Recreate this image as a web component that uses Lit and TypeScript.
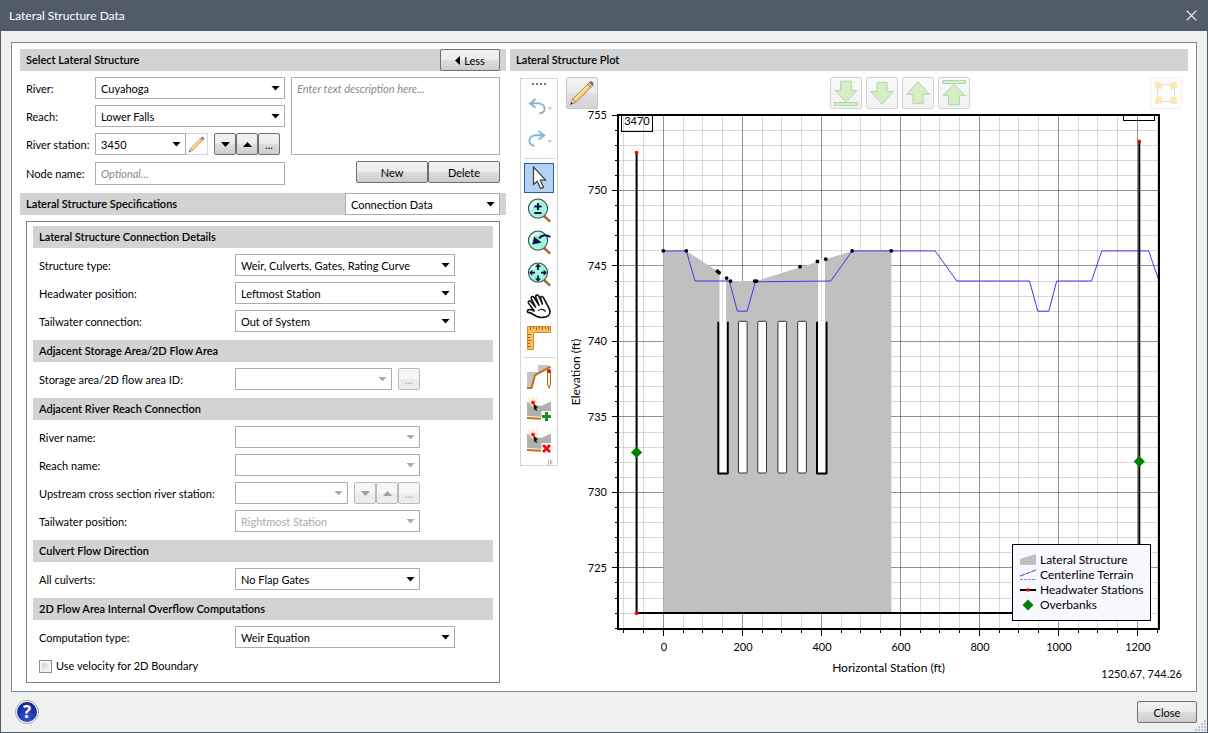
import { LitElement, html, svg, css, nothing, TemplateResult } from "lit";
import { customElement, property, state } from "lit/decorators.js";
import { classMap } from "lit/directives/class-map.js";

type Point = [number, number];

/* ---------- Icons ---------- */

const pencil = html`<svg class="pencil" viewBox="0 0 26 26" aria-hidden="true">
  <path d="M1.4 24.6 L3.8 19 L7 22.2 Z" fill="#f1dcb4" stroke="#8f7648" stroke-width=".7" />
  <path d="M1.4 24.6 L2.4 22 L4 23.6 Z" fill="#222" />
  <path d="M3.8 19 L18.6 4.2 L21.8 7.4 L7 22.2 Z" fill="#f5cf7a" stroke="#8a6a34" stroke-width=".7" />
  <path d="M5.2 19.8 L19.4 5.6" stroke="#fdebb0" stroke-width="1.2" />
  <path d="M18.6 4.2 L20.4 2.4 L23.6 5.6 L21.8 7.4 Z" fill="#c9d3cb" stroke="#55655a" stroke-width=".7" />
  <path d="M20.4 2.4 Q22 .8 23.6 2.4 Q25.2 4 23.6 5.6 Z" fill="#d0606a" stroke="#8b3438" stroke-width=".6" />
</svg>`;

const undo = html`<svg class="history" viewBox="0 0 26 20" aria-hidden="true">
  <path d="M9.5 2 L4 6.5 L9.5 10.5 M4.5 6.3 H11 C16.5 6.3 18.6 9 18.6 11.5 C18.6 14.5 16.5 16.3 13.2 16.3" fill="none" stroke="#85b7d6" stroke-width="2" />
  <path d="M21.5 10.5 H26 L23.7 12.8 Z" fill="#b4b4b4" />
</svg>`;

const redo = html`<svg class="history" viewBox="0 0 26 20" aria-hidden="true">
  <path d="M12.5 2 L18 6.5 L12.5 10.5 M17.5 6.3 H10.5 C5.5 6.3 3.4 9 3.4 11.8 C3.4 14.5 5.5 16.6 8.6 16.8" fill="none" stroke="#85b7d6" stroke-width="2" />
  <path d="M21.5 11.5 H26 L23.7 13.8 Z" fill="#b4b4b4" />
</svg>`;

const pointer = html`<svg class="tool" viewBox="0 0 24 24" aria-hidden="true">
  <path d="M6.5 1 V18.5 L10.2 15.2 L13.6 22.6 L16.6 21.4 L13.4 14.2 H18.6 Z" fill="#fff" stroke="#3c3c3c" stroke-width="1.2" />
</svg>`;

const magnifier = (inner: TemplateResult) => html`<svg class="tool" viewBox="0 0 24 24" aria-hidden="true">
  <path d="M17 18 L23.2 23.6" stroke="#a5692f" stroke-width="2.6" />
  <circle cx="11" cy="10.6" r="9.6" fill="#a5f5dd" stroke="#3b4f4a" stroke-width="1.1" />
  <path d="M4 12 A7.5 7.5 0 0 1 12 3.5" fill="none" stroke="#defff5" stroke-width="2.4" />
  ${inner}
</svg>`;

const zoomInOut = magnifier(svg`<path d="M11 5 V12 M7.4 8.5 H14.6 M7.4 15 H14.6" stroke="#12124f" stroke-width="2" />`);
const zoomPrevious = magnifier(svg`
  <path d="M23.5 7 C19 4.2 15 5 12 8.2" fill="none" stroke="#12124f" stroke-width="2" />
  <path d="M5.4 14.6 L7 6.4 L14.6 12.6 Z" fill="#12124f" />`);
const zoomExtents = magnifier(svg`
  <path d="M11 1.6 L14 5 H8 Z M11 19.8 L14 16.4 H8 Z M2 10.7 L5.4 7.7 V13.7 Z M20 10.7 L16.6 7.7 V13.7 Z" fill="#12124f" />
  <path d="M11 4 V8 M11 13.4 V17 M4 10.7 H8 M14 10.7 H18" stroke="#12124f" stroke-width="1.8" />`);

const hand = html`<svg class="tool" viewBox="0 0 24 24" aria-hidden="true">
  <path d="M9.3 22.3 C6.5 20.6 4.2 18.7 1.2 18.4 C-.2 18.2 .2 15.8 2 15.6 C4 15.3 5.5 16.2 7.2 17 L1.6 9.4 C.4 7.4 2.6 6 4 7.7 L8.6 13 L4.4 5 C3.4 2.8 5.8 1.6 7.2 3.6 L12 11.2 L8.8 3.2 C8.2 1 10.8 .2 11.8 2.2 L15.4 10 L13.6 4.4 C13.2 2.4 15.4 1.8 16.4 3.6 L21.4 13 C23.6 17 23.4 20 21.4 21.6 C18.5 23.8 12.5 24 9.3 22.3 Z" fill="#fff" stroke="#111" stroke-width="1.6" stroke-linejoin="round" />
  <path d="M11 16.8 C14 14.2 17 15.4 18.6 17.6" fill="none" stroke="#111" stroke-width="1.1" />
</svg>`;

const ruler = html`<svg class="tool" viewBox="0 0 24 24" aria-hidden="true">
  <path d="M.5 .5 H23.5 V6.5 H6.5 V23.5 H.5 Z" fill="#f8bf5e" stroke="#d98c1c" />
  <path d="M3.5 1 V4 M6.5 1 V3 M9.5 1 V4 M12.5 1 V3 M15.5 1 V4 M18.5 1 V3 M21.5 1 V4 M1 8.5 H4 M1 11.5 H3 M1 14.5 H4 M1 17.5 H3 M1 20.5 H4" stroke="#9a6415" />
</svg>`;

const editProfile = html`<svg class="tool" viewBox="0 0 24 24" aria-hidden="true">
  <path d="M0 7 H11 V0 H22 V4 L8 11 L5 23 H0 Z" fill="#c4c4c4" />
  <path d="M0 23 H4.6 L8 10.2 L23.6 1.6" fill="none" stroke="#c66f10" stroke-width="1.9" />
  <path d="M20.5 7.5 H23.5 V19 L22 23.4 L20.5 19 Z" fill="#fff4dd" stroke="#b4681a" />
  <circle cx="22" cy="6.2" r="2.1" fill="#d31f1f" />
</svg>`;

const terrainPoint = (badge: TemplateResult) => html`<svg class="tool" viewBox="0 0 24 24" aria-hidden="true">
  <path d="M0 5 L14 9 L24 4.6 V14 H15 V20 L0 19 Z" fill="#b0b0b0" />
  <path d="M0 21 L14 21.8" stroke="#c66f10" stroke-width="2" />
  <path d="M6 -1 V12 M-.5 5.6 H12.5 M1.2 .8 L10.8 10.4 M10.8 .8 L1.2 10.4" stroke="#f7b77a" stroke-width="1" stroke-dasharray="1.5 1" />
  <circle cx="6" cy="5.6" r="3.4" fill="#fde3cb" />
  <circle cx="6" cy="5.6" r="1.9" fill="#ee1c1c" />
  <path d="M6.8 6.6 L11 11 L9 11.4 L10.2 13.6 L8.8 14 L8 12 L6.8 13 Z" fill="#111" />
  <rect x="14.5" y="14" width="10" height="10" fill="#fff" />
  ${badge}
</svg>`;
const addPoint = terrainPoint(svg`<path d="M19.5 15 V24 M15 19.5 H24" stroke="#1f8f1f" stroke-width="3" />`);
const removePoint = terrainPoint(svg`<path d="M16 16 L23 23 M23 16 L16 23" stroke="#ee1313" stroke-width="3" />`);

const arrow = (kind: string) => {
  const down = kind.startsWith("down");
  const toEnd = kind.endsWith("end");
  const flip = down ? "" : "matrix(1 0 0 -1 0 26)";
  return html`<svg class="arrow" viewBox="0 0 26 26" aria-hidden="true">
    <g fill="#d6edc6" stroke="#b3d3b0" stroke-width="1" transform=${flip || nothing}>
      ${toEnd
        ? svg`<path d="M7.6 1.2 H18.4 V10.6 H24 L13 21.6 L2 10.6 H7.6 Z" /><path d="M1.5 22.5 H24.5 V25.5 H1.5 Z" />`
        : svg`<path d="M8 2.4 H18 V11.6 H24.4 L13 24 L1.6 11.6 H8 Z" />`}
    </g>
  </svg>`;
};

const extents = html`<svg class="arrow" viewBox="0 0 26 26" aria-hidden="true">
  <rect x="4.5" y="4.5" width="17" height="17" fill="none" stroke="#d6e2ee" stroke-width="1.2" />
  <g fill="#fdeaa6">
    <path d="M2 2 H9 L7 4 L10 7 L7 10 L4 7 L2 9 Z" />
    <path d="M24 2 V9 L22 7 L19 10 L16 7 L19 4 L17 2 Z" />
    <path d="M2 24 V17 L4 19 L7 16 L10 19 L7 22 L9 24 Z" />
    <path d="M24 24 H17 L19 22 L16 19 L19 16 L22 19 L24 17 Z" />
  </g>
</svg>`;

/* ---------- Profile plot ---------- */

@customElement("profile-plot")
export class ProfilePlot extends LitElement {
  @state() private w = 622;
  @state() private h = 574;
  private observer?: ResizeObserver;

  private readonly domainX: Point = [-115, 1255];
  private readonly domainY: Point = [720.95, 755];

  private readonly structure: Point[] = [
    [0, 722], [0, 746], [58, 746], [140, 744.6], [170, 744], [236, 744], [478, 746], [577, 746], [577, 722],
  ];
  private readonly vertices: Point[] = [
    [0, 746], [58, 746], [137, 744.65], [141, 744.55], [160, 744.2], [170, 744], [231, 744], [236, 744],
    [346, 744.95], [390, 745.3], [411, 745.45], [478, 746], [577, 746],
  ];
  private readonly terrain: Point[] = [
    [0, 746], [58, 746], [80, 744], [167, 744], [187, 742], [212, 742], [233, 743.95], [424, 744], [478, 746],
    [688, 746], [743, 744], [927, 744], [948, 742], [976, 742], [996, 744], [1084, 744], [1110, 746],
    [1229, 746], [1255, 744],
  ];
  private readonly headwater: Point[] = [[-68, 752.5], [-68, 722], [1205, 722], [1205, 753.25]];
  private readonly overbanks: Point[] = [[-68, 732.65], [1205, 732.05]];
  private readonly culverts: Point[] = [[190, 212], [239, 261], [290, 312], [340, 362]];
  private readonly gates: [number, number, number][] = [[139, 163, 744.65], [389, 413, 745.5]];

  static styles = css`
    :host {
      display: block;
      flex: 1 1 0;
      min-height: 400px;
      contain: size;
      overflow: hidden;
    }
    svg { display: block; font-family: Lato, "Open Sans", sans-serif; font-size: 12px; }
    .tick { font-size: 11px; }
    .crisp { shape-rendering: crispEdges; }
    .end { text-anchor: end; }
    .mid { text-anchor: middle; }
    .minor { stroke: #000; stroke-opacity: 0.15; }
    .major { stroke: #000; stroke-opacity: 0.42; }
    .ink { stroke: #000; fill: none; }
    .thick { stroke-width: 2; }
    .slot { fill: #fff; stroke: #333; }
    .body { fill: #c0c0c0; }
    .void { fill: #fff; }
    .terrain { fill: none; stroke: #3a3af0; }
    .water { fill: none; stroke: #000; stroke-width: 2; }
    .red { fill: #f00; }
    .green { fill: #008000; }
    .legend { fill: #f8f8ff; stroke: #000; }
  `;

  connectedCallback() {
    super.connectedCallback();
    this.observer = new ResizeObserver(([entry]) => {
      this.w = Math.round(entry.contentRect.width);
      this.h = Math.round(entry.contentRect.height);
    });
    this.observer.observe(this);
  }

  disconnectedCallback() {
    this.observer?.disconnect();
    super.disconnectedCallback();
  }

  private get frame() {
    return { left: 52, top: 6, right: this.w - 29, bottom: this.h - 54 };
  }

  private x(station: number) {
    const { left, right } = this.frame;
    const [a, b] = this.domainX;
    return left + ((station - a) / (b - a)) * (right - left);
  }

  private y(elevation: number) {
    const { top, bottom } = this.frame;
    const [a, b] = this.domainY;
    return bottom - ((elevation - a) / (b - a)) * (bottom - top);
  }

  private points(list: Point[]) {
    return list.map(([s, e]) => `${this.x(s).toFixed(1)},${this.y(e).toFixed(1)}`).join(" ");
  }

  private range(from: number, to: number, step: number) {
    const out: number[] = [];
    for (let v = from; v <= to; v += step) out.push(v);
    return out;
  }

  private grid() {
    const { left, top, right, bottom } = this.frame;
    return svg`<g class="crisp">
      ${this.range(-100, 1250, 50).map((s) => {
        const x = Math.floor(this.x(s)) + 0.5;
        const major = s % 200 === 0;
        return svg`<path class=${major ? "major" : "minor"} d="M${x} ${top} V${bottom}" />
          <path class="ink" d="M${x} ${bottom} v${major ? 7 : 4}" />`;
      })}
      ${this.range(721, 755, 1).map((e) => {
        const y = Math.floor(this.y(e)) + 0.5;
        const major = e % 5 === 0;
        return svg`<path class=${major ? "major" : "minor"} d="M${left} ${y} H${right}" />
          <path class="ink" d="M${left} ${y} h${major ? -6 : -3}" />`;
      })}
    </g>`;
  }

  private openings() {
    const top = this.y(741.3);
    const bottom = this.y(731.25);
    return svg`
      ${this.gates.map(([a, b, crest]) => svg`
        <rect class="void" x=${this.x(a + 3)} y=${this.y(crest)} width=${this.x(b - 4) - this.x(a + 3)} height=${top - this.y(crest) + 1} />
        <path class="minor" d="M${this.x((a + b) / 2 - 1)} ${this.y(crest)} V${top}" />
        <path class="void" d="M${this.x(a)} ${top} V${bottom} H${this.x(b)} V${top} Z" />
        <path class="ink thick" stroke-linejoin="round" d="M${this.x(a)} ${top} V${bottom} H${this.x(b)} V${top}" />`)}
      ${this.culverts.map(([a, b]) => svg`
        <rect class="slot" x=${this.x(a)} y=${top - 0.5} width=${this.x(b) - this.x(a)} height=${bottom - top} rx="1" />`)}`;
  }

  private diamond(cx: number, cy: number, r: number) {
    return svg`<path class="green" d="M${cx} ${cy - r} L${cx + r} ${cy} L${cx} ${cy + r} L${cx - r} ${cy} Z" />`;
  }

  private legend() {
    const { right, bottom } = this.frame;
    const left = right - 146.5;
    const top = bottom - 84.5;
    const names = ["Lateral Structure", "Centerline Terrain", "Headwater Stations", "Overbanks"];
    return svg`
      <rect class="legend" x=${left} y=${top} width="138" height="76" />
      <g transform="translate(${left + 7.5} ${top + 7.5})">
        <path class="body" d="M0 7 L16 2 V13 H0 Z" />
        <path class="terrain" stroke-dasharray="5 1" d="M0 24 L16 18" />
        <path class="terrain" stroke-dasharray="3 1" stroke-opacity=".6" d="M0 27.5 H16" />
        <path class="water" d="M0 38 H16" />
        <circle class="red" cx="8" cy="38" r="1.8" />
        ${this.diamond(8, 53, 5.5)}
        ${names.map((name, i) => svg`<text x="20" y=${12 + i * 15}>${name}</text>`)}
      </g>`;
  }

  render() {
    const { left, top, right, bottom } = this.frame;
    const cx = (left + right) / 2;
    const cy = (top + bottom) / 2;
    const tagA = Math.round(this.x(-68));
    const tagB = Math.round(this.x(1205));
    return html`<svg width=${this.w} height=${this.h} viewBox="0 0 ${this.w} ${this.h}">
      <defs>
        <clipPath id="area"><rect x=${left} y=${top} width=${right - left} height=${bottom - top} /></clipPath>
      </defs>
      ${this.grid()}
      <g clip-path="url(#area)">
        <polygon class="body" points=${this.points(this.structure)} />
        ${this.openings()}
        <polyline class="terrain" points=${this.points(this.terrain)} />
        ${this.vertices.map(([s, e]) => svg`<circle cx=${this.x(s)} cy=${this.y(e)} r="1.9" />`)}
        <polyline class="water" points=${this.points(this.headwater)} />
        ${this.headwater.map(([s, e]) => svg`<circle class="red" cx=${this.x(s)} cy=${this.y(e)} r="1.9" />`)}
        ${this.overbanks.map(([s, e]) => this.diamond(this.x(s), this.y(e), 5.6))}
        <rect class="ink" x=${tagA - 15.5} y=${top - 12.5} width="31" height="29" />
        <text class="tick mid" x=${tagA} y=${top + 10}>3470</text>
        <rect class="ink" x=${tagB - 15.5} y=${top - 23.5} width="31" height="29" />
      </g>
      <rect class="ink thick crisp" x=${left} y=${top} width=${right - left} height=${bottom - top} />
      ${this.legend()}
      ${this.range(725, 755, 5).map((e) => svg`<text class="tick end" x=${left - 11} y=${Math.round(this.y(e)) + 4}>${e}</text>`)}
      ${this.range(0, 1200, 200).map((s) => svg`<text class="tick mid" x=${Math.ceil(this.x(s))} y=${bottom + 22}>${s}</text>`)}
      <text class="mid" x=${cx} y=${bottom + 43}>Horizontal Station (ft)</text>
      <text class="mid" transform="translate(14 ${cy}) rotate(-90)">Elevation (ft)</text>
      <text class="tick end" x=${this.w - 6} y=${this.h - 5}>1250.67, 744.26</text>
    </svg>`;
  }
}

/* ---------- Dialog ---------- */

@customElement("app-root")
export class AppRoot extends LitElement {
  @property() station = "3450";

  static styles = css`
    :host {
      display: block;
      font-family: Lato, "Open Sans", sans-serif;
      font-size: 11px;
      line-height: 14px;
      color: #000;
    }
    * { box-sizing: border-box; }
    button, input, select, textarea { font: inherit; color: inherit; margin: 0; }
    .window {
      display: flex;
      flex-direction: column;
      min-height: 100vh;
      background: #f0f0f0;
      border: 1px solid #4f5b69;
      border-top: 0;
    }
    .titlebar {
      display: flex;
      align-items: center;
      justify-content: space-between;
      height: 31px;
      padding: 0 10px 0 8px;
      background: #515c6a;
      color: #fff;
      font-size: 12px;
    }
    h1, h2 { margin: 0; font-size: inherit; font-weight: inherit; }
    .dismiss { display: grid; padding: 0; border: 0; background: none; }
    .dismiss svg { width: 11px; height: 11px; }

    .panel {
      flex: 1;
      display: grid;
      grid-template-columns: 486px 1fr;
      gap: 4px;
      margin: 11px 10px 0;
      padding: 6px 8px 8px;
      background: #fff;
      border: 1px solid #828790;
    }
    .column { display: flex; flex-direction: column; min-width: 0; }
    .section {
      display: flex;
      align-items: center;
      justify-content: space-between;
      height: 22px;
      padding: 0 6px;
      background: #d3d3d3;
    }
    .section h2 { font-weight: 600; }

    .identity {
      display: grid;
      grid-template-columns: 69px 190px 1fr;
      row-gap: 6px;
      align-items: center;
      margin: 6px 6px 8px;
    }
    .identity label, .row label, .check { padding-top: 2px; }
    .description { grid-area: 1 / 3 / 4 / 4; align-self: stretch; margin-left: 6px; }
    .inline { display: flex; gap: 6px; }
    .group { display: flex; }
    .trailing { display: flex; justify-content: flex-end; align-self: start; }

    textarea, .text {
      padding: 4px 5px;
      border: 1px solid #abadb3;
      background: #fff;
      border-radius: 0;
      resize: none;
      outline: none;
    }
    .text { width: 100%; height: 23px; margin-top: 1px; }
    ::placeholder { color: #8a8a8a; font-style: italic; opacity: 1; }

    .combo { display: grid; align-items: center; height: 22px; color: #000; }
    .combo select, .combo::after { grid-area: 1 / 1; }
    .combo select {
      width: 100%;
      height: 22px;
      padding: 1px 18px 0 5px;
      border: 1px solid #acacac;
      border-radius: 0;
      background: #fff;
      appearance: none;
      opacity: 1;
    }
    .combo::after {
      content: "";
      justify-self: end;
      width: 9px;
      height: 5px;
      margin-right: 5px;
      background: currentColor;
      clip-path: polygon(0 0, 100% 0, 50% 100%);
      pointer-events: none;
    }
    .combo.off { color: #acacac; }
    .combo.full { width: 190px; }
    .combo.station { width: 91px; }
    .combo.view { width: 155px; }
    .combo.wide { width: 220px; }
    .combo.medium { width: 185px; }
    .combo.area { width: 157px; }
    .combo.cross { width: 113px; }

    .push {
      display: inline-flex;
      align-items: center;
      justify-content: center;
      gap: 4px;
      width: 72px;
      height: 22px;
      padding: 1px 0 0;
      border: 1px solid #707070;
      border-radius: 2px;
      background: linear-gradient(#f3f3f3, #ebebeb 50%, #dddddd 50%, #cdcdcd);
    }
    .push.short { width: 60px; }
    .push.mini { width: 22px; }
    .push:disabled { color: #a0a0a0; border-color: #b8bbbd; background: linear-gradient(#f6f6f6 50%, #ececec 50%); }
    .push svg { width: 9px; height: 5px; fill: currentColor; }
    .push .left { width: 5px; height: 9px; }
    .edit {
      display: grid;
      place-items: center;
      width: 22px;
      height: 22px;
      padding: 0;
      border: 1px solid #d9d9d9;
      border-left: 0;
      background: #fff;
    }
    .edit .pencil { width: 17px; height: 17px; }

    .specs {
      display: flex;
      flex-direction: column;
      gap: 6px;
      margin: 6px 6px 0;
      padding: 4px 6px 6px;
      border: 1px solid #828282;
    }
    .specs .section:not(:first-child) { margin-top: 2px; }
    .row {
      display: grid;
      grid-template-columns: 196px 1fr;
      align-items: center;
      height: 22px;
      padding-left: 6px;
    }
    .check { display: flex; align-items: center; gap: 4px; height: 22px; padding-left: 6px; }
    .check input {
      appearance: none;
      width: 13px;
      height: 13px;
      border: 1px solid #8e8f8f;
      background: linear-gradient(135deg, #cbcfd5, #f6f6f6) content-box, #f4f4f4;
      padding: 2px;
    }

    .workspace { flex: 1; display: flex; gap: 8px; padding: 6px 0 0 10px; }
    .toolbar {
      display: flex;
      flex-direction: column;
      align-items: center;
      align-self: flex-start;
      gap: 2px;
      width: 38px;
      margin-top: 1px;
      border: 1px solid #d3d3d3;
    }
    .handle { display: flex; justify-content: center; gap: 2px; height: 11px; padding-top: 4px; }
    .handle i { width: 2px; height: 2px; background: #707070; }
    .toolbar button { display: grid; place-items: center; width: 30px; height: 30px; padding: 0; border: 0; background: none; }
    .toolbar button.on { border: 1px solid #1c62b9; background: #b5d3f0; }
    .toolbar hr { width: 31px; height: 1px; margin: 2px 0; border: 0; background: #d3d3d3; }
    .toolbar .overflow { width: 100%; height: 7px; }
    .toolbar .overflow svg { width: 5px; height: 6px; margin-left: auto; margin-right: 4px; }
    .tool { display: block; width: 24px; height: 24px; overflow: visible; }
    .history { display: block; width: 26px; height: 20px; }

    .plot-column { flex: 1; display: flex; flex-direction: column; min-width: 0; }
    .plot-actions { display: flex; justify-content: space-between; padding-right: 6px; }
    .steps { display: flex; gap: 4px; padding-left: 52px; }
    .square {
      display: grid;
      place-items: center;
      width: 32px;
      height: 32px;
      padding: 0;
      border: 1px solid #c6c6c6;
      border-radius: 2px;
      background: linear-gradient(#f3f3f3, #ebebeb 50%, #e0e0e0 50%, #d3d3d3);
    }
    .square:disabled { border-color: #d3d3d3; background: linear-gradient(#f9f9f9, #f1f1f1); }
    .square.faint:disabled { border-color: #f0f0f0; background: #fefefe; }
    .square .pencil { width: 26px; height: 26px; }
    .arrow { display: block; width: 26px; height: 26px; }

    .footer {
      position: relative;
      display: flex;
      align-items: center;
      justify-content: space-between;
      height: 40px;
      padding: 0 10px 0 14px;
    }
    .help { display: block; padding: 0; border: 0; background: none; }
    .help svg { display: block; width: 24px; height: 24px; }
    .help text { font: 700 17px "Open Sans", sans-serif; fill: #fff; text-anchor: middle; }
    .grip { position: absolute; right: 1px; bottom: 1px; width: 11px; height: 11px; fill: #bcc3cd; }
  `;

  private combo(id: string, size: string, value = "", disabled = false) {
    return html`<span class=${classMap({ combo: true, [size]: true, off: disabled })}>
      <select id=${id} ?disabled=${disabled}><option>${value}</option></select>
    </span>`;
  }

  private row(id: string, label: string, control: TemplateResult) {
    return html`<div class="row"><label for=${id}>${label}</label>${control}</div>`;
  }

  private section(title: string) {
    return html`<div class="section"><h2>${title}</h2></div>`;
  }

  private stepper(disabled = false) {
    return html`<span class="group">
      <button class="push mini" aria-label="Next" ?disabled=${disabled}>
        <svg viewBox="0 0 9 5"><path d="M0 0 H9 L4.5 5 Z" /></svg>
      </button>
      <button class="push mini" aria-label="Previous" ?disabled=${disabled}>
        <svg viewBox="0 0 9 5"><path d="M0 5 H9 L4.5 0 Z" /></svg>
      </button>
      <button class="push mini" ?disabled=${disabled}>...</button>
    </span>`;
  }

  private tool(label: string, icon: TemplateResult, on = false) {
    return html`<button class=${classMap({ on })} aria-label=${label}>${icon}</button>`;
  }

  private renderForm() {
    return html`<section class="column">
      <div class="section">
        <h2>Select Lateral Structure</h2>
        <button class="push short">
          <svg class="left" viewBox="0 0 5 9"><path d="M5 0 V9 L0 4.5 Z" /></svg>Less
        </button>
      </div>
      <div class="identity">
        <label for="river">River:</label>
        ${this.combo("river", "full", "Cuyahoga")}
        <textarea class="description" aria-label="Description" placeholder="Enter text description here..."></textarea>
        <label for="reach">Reach:</label>
        ${this.combo("reach", "full", "Lower Falls")}
        <label for="station">River station:</label>
        <div class="inline">
          <span class="group">
            ${this.combo("station", "station", this.station)}
            <button class="edit" aria-label="Edit river station">${pencil}</button>
          </span>
          ${this.stepper()}
        </div>
        <label for="node">Node name:</label>
        <input id="node" class="text" placeholder="Optional..." />
        <div class="trailing">
          <button class="push">New</button>
          <button class="push">Delete</button>
        </div>
      </div>
      <div class="section">
        <h2>Lateral Structure Specifications</h2>
        ${this.combo("view", "view", "Connection Data")}
      </div>
      <div class="specs">
        ${this.section("Lateral Structure Connection Details")}
        ${this.row("type", "Structure type:", this.combo("type", "wide", "Weir, Culverts, Gates, Rating Curve"))}
        ${this.row("head", "Headwater position:", this.combo("head", "wide", "Leftmost Station"))}
        ${this.row("tail", "Tailwater connection:", this.combo("tail", "wide", "Out of System"))}
        ${this.section("Adjacent Storage Area/2D Flow Area")}
        ${this.row("area", "Storage area/2D flow area ID:", html`<div class="inline">
          ${this.combo("area", "area", "", true)}
          <button class="push mini" disabled>...</button>
        </div>`)}
        ${this.section("Adjacent River Reach Connection")}
        ${this.row("rname", "River name:", this.combo("rname", "medium", "", true))}
        ${this.row("rreach", "Reach name:", this.combo("rreach", "medium", "", true))}
        ${this.row("upstream", "Upstream cross section river station:", html`<div class="inline">
          ${this.combo("upstream", "cross", "", true)}${this.stepper(true)}
        </div>`)}
        ${this.row("tailpos", "Tailwater position:", this.combo("tailpos", "medium", "Rightmost Station", true))}
        ${this.section("Culvert Flow Direction")}
        ${this.row("culverts", "All culverts:", this.combo("culverts", "medium", "No Flap Gates"))}
        ${this.section("2D Flow Area Internal Overflow Computations")}
        ${this.row("comp", "Computation type:", this.combo("comp", "wide", "Weir Equation"))}
        <label class="check"><input type="checkbox" />Use velocity for 2D Boundary</label>
      </div>
    </section>`;
  }

  private renderPlot() {
    return html`<section class="column">
      ${this.section("Lateral Structure Plot")}
      <div class="workspace">
        <div class="toolbar" role="toolbar">
          <span class="handle"><i></i><i></i><i></i><i></i></span>
          ${this.tool("Undo", undo)}
          ${this.tool("Redo", redo)}
          <hr />
          ${this.tool("Select", pointer, true)}
          ${this.tool("Zoom", zoomInOut)}
          ${this.tool("Zoom previous", zoomPrevious)}
          ${this.tool("Zoom extents", zoomExtents)}
          ${this.tool("Pan", hand)}
          ${this.tool("Measure", ruler)}
          <hr />
          ${this.tool("Edit profile", editProfile)}
          ${this.tool("Add point", addPoint)}
          ${this.tool("Remove point", removePoint)}
          <button class="overflow" aria-label="More tools">
            <svg viewBox="0 0 5 6" fill="#bdbdbd"><path d="M0 0 H1 V6 H0 Z M2 0 L5 3 L2 6 Z" /></svg>
          </button>
        </div>
        <div class="plot-column">
          <div class="plot-actions">
            <button class="square" aria-label="Edit">${pencil}</button>
            <div class="steps">
              ${["down-end", "down", "up", "up-end"].map(
                (kind) => html`<button class="square" aria-label=${kind} disabled>${arrow(kind)}</button>`
              )}
            </div>
            <button class="square faint" aria-label="Full extents" disabled>${extents}</button>
          </div>
          <profile-plot></profile-plot>
        </div>
      </div>
    </section>`;
  }

  render() {
    return html`<div class="window">
      <header class="titlebar">
        <h1>Lateral Structure Data</h1>
        <button class="dismiss" aria-label="Close window">
          <svg viewBox="0 0 11 11"><path d="M.7 .7 L10.3 10.3 M10.3 .7 L.7 10.3" stroke="#fff" stroke-width="1.1" /></svg>
        </button>
      </header>
      <main class="panel">${this.renderForm()}${this.renderPlot()}</main>
      <footer class="footer">
        <button class="help" aria-label="Help">
          <svg viewBox="0 0 24 24">
            <defs>
              <radialGradient id="ball" cx="50%" cy="75%" r="70%">
                <stop offset="0" stop-color="#2f55d4" /><stop offset="1" stop-color="#0f2590" />
              </radialGradient>
            </defs>
            <circle cx="12" cy="12" r="11.5" fill="#f4f4f4" stroke="#a8a8a8" />
            <circle cx="12" cy="12" r="10" fill="url(#ball)" />
            <text x="12" y="18">?</text>
          </svg>
        </button>
        <button class="push short">Close</button>
        <svg class="grip" viewBox="0 0 11 11">
          <path d="M9 0h2v2H9z M6 3h2v2H6z M9 3h2v2H9z M3 6h2v2H3z M6 6h2v2H6z M9 6h2v2H9z M0 9h2v2H0z M3 9h2v2H3z M6 9h2v2H6z M9 9h2v2H9z" />
        </svg>
      </footer>
    </div>`;
  }
}
